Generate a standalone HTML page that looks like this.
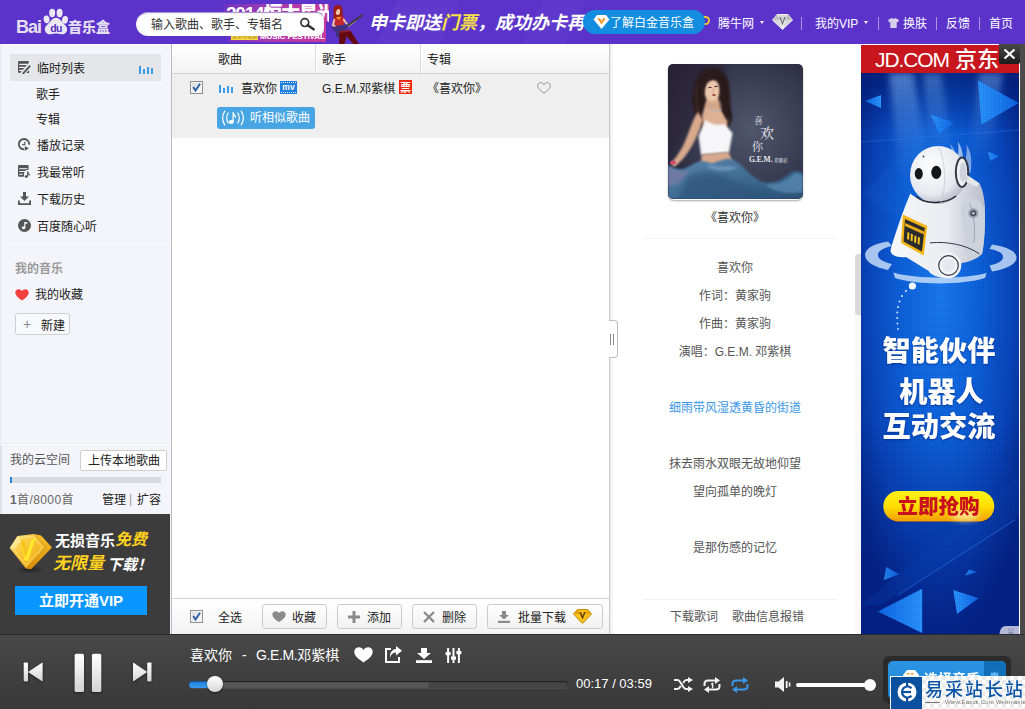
<!DOCTYPE html>
<html lang="zh-CN">
<head>
<meta charset="utf-8">
<title>百度音乐盒</title>
<style>
*{box-sizing:border-box;margin:0;padding:0}
html,body{width:1025px;height:709px;overflow:hidden;background:#fff}
body{font-family:"Liberation Sans","Noto Sans CJK SC",sans-serif;font-size:12px;color:#222;position:relative}
.abs{position:absolute}
.t{position:absolute;white-space:nowrap;line-height:16px;height:16px}
/* header */
#hd{position:absolute;left:0;top:0;width:1025px;height:44px;background:#5b33cb;overflow:hidden}
#hd .t{color:#fff}
#search{position:absolute;left:136px;top:12px;width:188px;height:24px;border-radius:12px 7px 7px 12px;background:#fff;box-shadow:inset 0 1px 1px rgba(60,30,140,.5)}
#pill{position:absolute;left:583px;top:10px;width:122px;height:24px;border-radius:12px;background:#128de0}
.sep{position:absolute;top:17px;width:1px;height:13px;background:#a997e3}
/* sidebar */
#sb{position:absolute;left:0;top:44px;width:172px;height:590px;background:#f4f5fa;border-right:1px solid #bcbcbc}
#sb .sel{position:absolute;left:10px;top:10px;width:151px;height:27px;background:#e5e6ea}
.btn{position:absolute;border:1px solid #cfcfcf;border-radius:3px;background:#fdfdfd}
#promo{position:absolute;left:0;top:470px;width:170px;height:120px;background:#3c3c3c}
/* list */
#list{position:absolute;left:172px;top:44px;width:438px;height:590px;background:#fff;border-right:1px solid #c9c9c9}
#lh{position:absolute;left:0;top:0;width:437px;height:30px;border-bottom:1px solid #d2d2d2;background:linear-gradient(#fff,#f2f2f2)}
#row{position:absolute;left:0;top:30px;width:437px;height:64px;background:#efefef}
#tb{position:absolute;left:0;top:554px;width:437px;height:36px;border-top:1px solid #d4d4d4;background:linear-gradient(#fff,#f3f3f3)}
.cb{position:absolute;width:13px;height:13px;border:1px solid #8e8f8f;background:linear-gradient(135deg,#d8d8d8,#fff);box-shadow:inset 0 0 0 1px #f4f4f4}
.btn.g{background:linear-gradient(#fff,#f1f1f1);border-color:#cbcbcb}
/* divider */
#dv{position:absolute;left:610px;top:44px;width:4px;height:590px;background:linear-gradient(90deg,#ececec,#fff)}
#hdl{position:absolute;left:609px;top:320px;width:9px;height:38px;border:1px solid #bdbdbd;border-left:none;border-radius:0 4px 4px 0;background:#fff}
#hdl i{position:absolute;top:13px;width:1px;height:11px;background:#888;left:1px}
#hdl i+i{left:4px}
/* lyric */
#ly{position:absolute;left:616px;top:44px;width:245px;height:590px}
#ly .l{position:absolute;left:0;width:238px;text-align:center;color:#555;line-height:16px;white-space:nowrap}
/* ad */
#ad{position:absolute;left:861px;top:45px;width:158px;height:589px;overflow:hidden;background:#0a3fc0}
/* player */
#pl{position:absolute;left:0;top:634px;width:1025px;height:75px;background:linear-gradient(#484848,#383838);border-top:1px solid #2b2b2b}
#pl .t{color:#fff}
#wm{position:absolute;left:890px;top:676px;width:135px;height:33px;overflow:hidden;background-color:#fff;background-image:linear-gradient(45deg,#ebebeb 25%,transparent 25%,transparent 75%,#ebebeb 75%),linear-gradient(45deg,#ebebeb 25%,transparent 25%,transparent 75%,#ebebeb 75%);background-size:8px 8px;background-position:0 0,4px 4px}
</style>
</head>
<body>

<!-- ================= HEADER ================= -->
<div id="hd">
  <div class="abs" style="left:0;top:0;width:1025px;height:44px;background:linear-gradient(115deg,rgba(255,255,255,0) 0 38%,rgba(255,255,255,.03) 38% 44%,rgba(255,255,255,0) 44% 52%,rgba(255,255,255,.025) 52% 56%,rgba(255,255,255,0) 56%)"></div>
  <!-- festival banner -->
  <div class="abs" style="left:223px;top:4px;width:106px;height:18px;background:linear-gradient(90deg,#6f35c4,#a13ab2 45%,#c83a9c)"></div>
  <div class="abs" style="left:229px;top:20px;width:97px;height:22px;background:linear-gradient(90deg,#7a36c0,#b03aac 45%,#c83a9c)"></div>
  <div class="abs" style="left:223px;top:4px;width:106px;height:38px;overflow:hidden">
    <span class="t" style="left:3px;top:-1px;font-size:19px;line-height:22px;height:22px;font-weight:900;color:#fff;letter-spacing:-1.200px">2014恒大星光</span>
    <div class="abs" style="left:8px;top:30px;width:27px;height:6px;background:#f3dc4a"></div>
    <span class="t" style="left:9px;top:29px;font-size:5px;line-height:7px;height:7px;font-weight:bold;color:#c49a22">音乐节现场</span>
    <span class="t" style="left:37px;top:28px;font-size:8px;line-height:10px;height:10px;font-weight:bold;color:#fff;letter-spacing:-.1px">MUSIC FESTIVAL</span>
  </div>
  <!-- guitar girl -->
  <svg class="abs" style="left:329px;top:3px" width="36" height="41" viewBox="0 0 36 41">
    <path d="M4.600 9 C4 4 6 2 9 2 C12.500 2 14 5 13.600 10 L13.800 15 L4.600 15.500 Z" fill="#9c1b15"/>
    <ellipse cx="8.800" cy="8.700" rx="2.300" ry="3.200" fill="#eec3a2"/>
    <path d="M5.500 7 C6 4 9 3 11.500 5 C10 5.500 8 6 7 8.500 L6 12Z" fill="#9c1b15"/>
    <path d="M4.700 15.500 L8 13.800 L13 13.500 L15.600 15 L14.800 24 L6.500 24Z" fill="#c3262c"/>
    <path d="M7 14.200 L9.800 17.200 L12.500 13.800Z" fill="#ee9620"/>
    <path d="M4.700 15.500 L2.800 22.500 L7.500 25.500 L8.500 24 L5.200 21.500 L6.300 16.500Z" fill="#eec3a2"/>
    <path d="M14.600 15 L19.500 21.500 L26.500 17 L27.300 18.300 L19.500 24 L13.800 17.500Z" fill="#eec3a2"/>
    <path d="M14 24.600 L33 11 L34.300 12.800 L15.200 26.500Z" fill="#3e3c48"/>
    <path d="M1.500 25 L9 22.500 L17.500 21.300 L19 25.500 L12.500 28.500 L10.500 33.500 L7.500 35 L6.500 28.500Z" fill="#43317e"/>
    <path d="M10.500 28 L21 27 L23 30 L11 31.500Z" fill="#8d1a22"/>
    <path d="M10.500 30 L22 28.500 L30 41 L24.500 41 L17.500 33.500 L15.500 41 L10 41Z" fill="#630a12"/>
  </svg>
  <span class="t" style="left:369px;top:10px;font-size:18px;line-height:26px;height:26px;font-weight:bold;font-style:italic;color:#fff" id="slogan">申卡即送<span style="color:#f5e04a">门票</span>，成功办卡再</span>
  <!-- logo -->
  <div id="logo">
    <span class="t" style="left:16px;top:18px;font-size:18px;line-height:18px;height:18px;font-weight:bold;color:#e6e0f3;letter-spacing:-1px">Bai</span>
    <svg class="abs" style="left:43px;top:8px" width="26" height="27" viewBox="0 0 26 27">
      <g fill="#ece8f5">
        <ellipse cx="9.2" cy="5" rx="3" ry="4.2"/>
        <ellipse cx="16.6" cy="5" rx="3" ry="4.2"/>
        <ellipse cx="3.6" cy="11.4" rx="2.9" ry="3.9" transform="rotate(-12 3.6 11.4)"/>
        <ellipse cx="22" cy="11.8" rx="2.9" ry="3.9" transform="rotate(12 22 11.8)"/>
        <path d="M13 9.800 C16.500 9.800 18 13 20.300 15.300 C22.800 17.800 24.600 19.300 24 22.400 C23.400 25.500 20.600 26.300 18.300 26.200 C16.300 26.100 14.800 25.600 13 25.600 C11.200 25.600 9.700 26.100 7.700 26.200 C5.400 26.300 2.600 25.500 2 22.400 C1.400 19.300 3.200 17.800 5.700 15.300 C8 13 9.500 9.800 13 9.800Z"/>
      </g>
      <text x="13" y="23.600" text-anchor="middle" font-family="Liberation Sans, sans-serif" font-weight="bold" font-size="10.5" fill="#5530c0" letter-spacing="-.6">du</text>
    </svg>
    <span class="t" style="left:68px;top:18px;font-size:14px;line-height:18px;height:18px;font-weight:900;color:#e4def2;letter-spacing:0">音乐盒</span>
  </div>
  <!-- search -->
  <div id="search"><span class="t" style="left:15px;top:5px;color:#333">输入歌曲、歌手、专辑名</span>
    <svg class="abs" style="left:160px;top:3px" width="22" height="18" viewBox="0 0 22 18"><circle cx="8.800" cy="7.600" r="3.900" fill="none" stroke="#333" stroke-width="1.700"/><path d="M11.800 10.200 L17.600 14.300" stroke="#333" stroke-width="2.600" stroke-linecap="round"/></svg>
  </div>
  <!-- pill -->
  <div class="abs" style="left:704px;top:16px;width:6px;height:9px;border:2px solid #e8c83a;border-left:none;border-radius:0 5px 5px 0"></div>
  <div id="pill">
    <svg class="abs" style="left:10px;top:4px" width="17" height="16" viewBox="0 0 17 16"><path d="M4 1 H13 L16.500 5.500 L8.500 15 L.5 5.500 Z" fill="#fff"/><path d="M4.500 4.200 H7 L8.500 7 L10 4.200 H12.500 L8.500 10.500 Z" fill="#f5921e"/></svg>
    <span class="t" style="left:27px;top:5px;color:#fff">了解白金音乐盒</span>
  </div>
  <span class="t" style="left:718px;top:16px">腾牛网</span>
  <div class="abs" style="left:760px;top:21px;border:2.5px solid transparent;border-top:3px solid #fff;width:0;height:0"></div>
  <!-- diamond -->
  <svg class="abs" style="left:772px;top:14px" width="21" height="16" viewBox="0 0 21 16"><path d="M5 .5 H16 L20.500 6 L10.500 15.500 L.5 6 Z" fill="#d9d9dc" stroke="#f4f4f6" stroke-width="1"/><path d="M5 .5 L7.500 6 H.5 Z M16 .5 L13.500 6 H20.500 Z" fill="#bdbdc4"/><path d="M7.500 6 H13.500 L10.500 15.500 Z" fill="#f2f2f4"/><path d="M7.200 3 H8.800 L10.500 8 L12.200 3 H13.800 L10.500 11.500 Z" fill="#77777f"/></svg>
  <span class="t" style="left:815px;top:16px">我的VIP</span>
  <div class="abs" style="left:864px;top:21px;border:2.5px solid transparent;border-top:3px solid #fff;width:0;height:0"></div>
  <svg class="abs" style="left:888px;top:18px" width="11" height="10" viewBox="0 0 11 10"><path d="M3.500 0 Q5.500 1.600 7.500 0 L11 2 L9.800 4.600 L8.700 4 V10 H2.300 V4 L1.200 4.600 L0 2 Z" fill="#d6d0e8"/></svg>
  <span class="t" style="left:903px;top:16px">换肤</span>
  <span class="t" style="left:946px;top:16px">反馈</span>
  <span class="t" style="left:989px;top:16px">首页</span>
  <div class="sep" style="left:801px"></div>
  <div class="sep" style="left:878px"></div>
  <div class="sep" style="left:936px"></div>
  <div class="sep" style="left:979px"></div>
</div>

<!-- ================= SIDEBAR ================= -->
<div id="sb">
  <div class="abs" style="left:0;top:200px;width:170px;height:1px;background:#fafbfd"></div>
  <div class="sel"></div>
  <div class="abs" style="left:0;top:0;width:171px;height:1px;background:#fbfbff"></div>
  <!-- icons -->
  <svg class="abs" style="left:18px;top:17px" width="13" height="13" viewBox="0 0 13 13"><rect x="0" y="0" width="11" height="12" rx="1.200" fill="#555"/><rect x="1.200" y="2.800" width="8" height="1.200" fill="#f1f1f4"/><rect x="1.200" y="5.800" width="5.500" height="1.200" fill="#f1f1f4"/><rect x="1.200" y="8.800" width="3.500" height="1.200" fill="#f1f1f4"/><path d="M11.500 2.500 L2.800 13" stroke="#e5e6ea" stroke-width="2.200"/><path d="M12.300 4.500 L4.600 12.800" stroke="#e5e6ea" stroke-width="4.500"/><path d="M11.600 5.300 L5.200 12.300" stroke="#555" stroke-width="1.900" stroke-linecap="round"/><path d="M11 9.700 V12 H8.800Z" fill="#555"/></svg>
  <svg class="abs" style="left:139px;top:21px" width="15" height="9" viewBox="0 0 15 9"><g fill="#3a9be6"><rect x="0" y="1" width="2" height="8"/><rect x="4" y="4" width="2" height="5"/><rect x="8" y="2" width="2" height="7"/><rect x="12" y="3" width="2" height="6"/></g></svg>
  <svg class="abs" style="left:18px;top:94px" width="13" height="13" viewBox="0 0 13 13"><path d="M6.300 11.400 A5.200 5.200 0 1 1 11.200 6.600" fill="none" stroke="#555" stroke-width="1.800"/><path d="M6.800 3.800 V6.600 H4.200" fill="none" stroke="#555" stroke-width="1.200"/><path d="M6.800 8.200 L11 10.300 L6.800 12.700Z" fill="#555"/></svg>
  <svg class="abs" style="left:18px;top:121px" width="13" height="13" viewBox="0 0 13 13"><rect x="0" y="0" width="10.600" height="11.700" rx="1" fill="#555"/><rect x="1.200" y="3.200" width="8.200" height="1" fill="#f4f5fa"/><rect x="1.200" y="6" width="5.800" height="1" fill="#f4f5fa"/><rect x="1.200" y="8.800" width="3.500" height="1" fill="#f4f5fa"/><path d="M6 13 V9.500 Q6 6 8.500 5 H12 V13Z" fill="#f4f5fa"/><ellipse cx="8.300" cy="11.500" rx="1.600" ry="1.300" fill="#555"/><path d="M9.100 11.500 V6.200 H10.200 Q10.500 8.500 12.200 10 L11.500 10.800 Q10.600 10 10.200 9.200 V11.500Z" fill="#555"/></svg>
  <svg class="abs" style="left:18px;top:148px" width="13" height="13" viewBox="0 0 13 13"><path d="M5 0 H8 V4.500 H11 L6.500 9 L2 4.500 H5Z" fill="#555"/><path d="M0 8.500 H1.800 V11.200 H11.200 V8.500 H13 V13 H0Z" fill="#555"/></svg>
  <svg class="abs" style="left:18px;top:175px" width="13" height="13" viewBox="0 0 13 13"><circle cx="6.500" cy="6.500" r="6.500" fill="#555"/><ellipse cx="5.600" cy="8.800" rx="1.800" ry="1.500" fill="#f3f4f9"/><path d="M6.200 8.800 V3 H9.300 V4.800 H7.400 V8.800Z" fill="#f3f4f9"/></svg>
  <svg class="abs" style="left:15px;top:245px" width="14" height="12" viewBox="0 0 15 13"><path d="M7.500 12.500 C3 9.500 .2 7 .2 3.800 C.2 1.600 1.900 .2 3.900 .2 C5.400 .2 6.800 1 7.500 2.300 C8.200 1 9.600 .2 11.100 .2 C13.100 .2 14.800 1.600 14.800 3.800 C14.800 7 12 9.500 7.500 12.500Z" fill="#f2403d"/></svg>

  <span class="t" style="left:37px;top:17px">临时列表</span>
  <span class="t" style="left:36px;top:43px">歌手</span>
  <span class="t" style="left:36px;top:68px">专辑</span>
  <span class="t" style="left:37px;top:94px">播放记录</span>
  <span class="t" style="left:37px;top:121px">我最常听</span>
  <span class="t" style="left:37px;top:148px">下载历史</span>
  <span class="t" style="left:37px;top:175px">百度随心听</span>
  <span class="t" style="left:15px;top:217px;font-weight:bold;color:#9a9a9a">我的音乐</span>
  <span class="t" style="left:35px;top:243px">我的收藏</span>
  <div class="btn" style="left:15px;top:269px;width:55px;height:22px;background:#f8f9fc"><span class="t" style="left:7px;top:2px;color:#888;font-size:14px">+</span><span class="t" style="left:25px;top:4px">新建</span></div>
  <div class="abs" style="left:0;top:399px;width:171px;height:1px;background:#ebecf1"></div>
  <div class="abs" style="left:0;top:400px;width:171px;height:1px;background:#fcfcfe"></div>
  <div class="abs" style="left:0;top:401px;width:3px;height:69px;background:linear-gradient(90deg,#d9dadf,#f4f5fa)"></div>
  <div class="abs" style="left:0;top:0;width:2px;height:399px;background:linear-gradient(90deg,#e6e7ec,#f4f5fa)"></div>
  <span class="t" style="left:10px;top:408px;color:#555">我的云空间</span>
  <div class="btn" style="left:80px;top:406px;width:87px;height:21px;background:#fff;border-radius:2px"><span class="t" style="left:7px;top:2px">上传本地歌曲</span></div>
  <div class="abs" style="left:10px;top:433px;width:151px;height:6px;background:#d9dadd"></div>
  <div class="abs" style="left:10px;top:433px;width:2px;height:6px;background:#2a7fe0"></div>
  <span class="t" style="left:10px;top:448px;color:#666;letter-spacing:.4px"><b>1</b>首/8000首</span>
  <span class="t" style="left:102px;top:448px;color:#222">管理</span>
  <span class="t" style="left:129px;top:447px;color:#999">|</span>
  <span class="t" style="left:137px;top:448px;color:#222">扩容</span>
  <div id="promo">
    <svg class="abs" style="left:9px;top:19px" width="46" height="40" viewBox="0 0 46 40">
      <defs>
        <linearGradient id="g1" x1="0" y1="0" x2="1" y2="1"><stop offset="0" stop-color="#ffe88a"/><stop offset=".45" stop-color="#fac432"/><stop offset="1" stop-color="#eea012"/></linearGradient>
        <linearGradient id="g2" x1="0" y1="0" x2="0" y2="1"><stop offset="0" stop-color="#f7c02a"/><stop offset="1" stop-color="#d98c08"/></linearGradient>
        <filter id="pb" x="-20%" y="-50%" width="140%" height="200%"><feGaussianBlur stdDeviation="1.200"/></filter>
      </defs>
      <ellipse cx="21" cy="36.500" rx="11" ry="1.800" fill="#1c1c1c" opacity=".7" filter="url(#pb)"/>
      <path d="M25.200 .9 L32.100 2.500 L43 14.500 L22 36.300 L17 35.500 L36.800 14.500Z" fill="url(#g2)"/>
      <path d="M.7 14.900 L8.500 2.900 L25.200 .9 L36.800 14.500 L17 35.500Z" fill="url(#g1)"/>
      <path d="M3.500 14.800 L9.800 5 L24 3.300 L33.500 14.400 L17.200 31.800Z" fill="none" stroke="#fff0a8" stroke-width=".7" opacity=".8"/>
      <path d="M.7 14.900 L8.500 2.900 L12 8 L6 15.500Z" fill="#fff2b0" opacity=".55"/>
      <path d="M12 7.800 L15.500 6.800 L17.500 22 L22.500 6.200 L26.500 5.600 L19 28 L15.500 27.500Z" fill="#ffe92a"/>
      <path d="M12 7.800 L15.500 6.800 L17.500 22 L16.500 25 Z" fill="#f5b014" opacity=".7"/>
    </svg>
    <span class="t" style="left:55px;top:17px;font-size:15px;line-height:20px;height:20px;font-weight:bold;color:#fff">无损音乐</span>
    <span class="t" style="left:115px;top:16px;font-size:16px;line-height:20px;height:20px;font-weight:bold;font-style:italic;color:#ffd21e">免费</span>
    <span class="t" style="left:53px;top:40px;font-size:17px;line-height:20px;height:20px;font-weight:bold;font-style:italic;color:#ffd21e">无限量</span>
    <span class="t" style="left:107px;top:41px;font-size:15px;line-height:20px;height:20px;font-weight:bold;font-style:italic;color:#fff">下载！</span>
    <div class="abs" style="left:15px;top:72px;width:132px;height:29px;background:#0a96ff"><span class="t" style="left:0;top:5px;width:132px;text-align:center;font-size:15px;line-height:20px;height:20px;font-weight:bold;color:#fff">立即开通VIP</span></div>
  </div>
</div>

<!-- ================= LIST ================= -->
<div id="list">
  <div id="lh">
    <span class="t" style="left:46px;top:8px">歌曲</span>
    <span class="t" style="left:150px;top:8px">歌手</span>
    <span class="t" style="left:255px;top:8px">专辑</span>
    <div class="abs" style="left:143px;top:0;width:1px;height:29px;background:#dcdcdc"></div>
    <div class="abs" style="left:144px;top:0;width:1px;height:29px;background:#fff"></div>
    <div class="abs" style="left:248px;top:0;width:1px;height:29px;background:#dcdcdc"></div>
    <div class="abs" style="left:249px;top:0;width:1px;height:29px;background:#fff"></div>
  </div>
  <div id="row">
    <div class="cb" style="left:18px;top:7px"><svg class="abs" style="left:1px;top:1px" width="9" height="9" viewBox="0 0 9 9"><path d="M1.200 4 L3.500 7.500 L8 .8" fill="none" stroke="#2c5ba8" stroke-width="1.900"/></svg></div>
    <svg class="abs" style="left:47px;top:10px" width="15" height="9" viewBox="0 0 15 9"><g fill="#3a9be6"><rect x="0" y="1" width="2" height="8"/><rect x="4" y="4" width="2" height="5"/><rect x="8" y="2" width="2" height="7"/><rect x="12" y="3" width="2" height="6"/></g></svg>
    <span class="t" style="left:69px;top:7px">喜欢你</span>
    <svg class="abs" style="left:108px;top:7px" width="17" height="13" viewBox="0 0 17 13"><rect width="17" height="13" fill="#1f80df"/><g fill="#dbeafa"><rect x="1" y="1" width="1" height="1"/><rect x="3" y="1" width="1" height="1"/><rect x="5" y="1" width="1" height="1"/><rect x="7" y="1" width="1" height="1"/><rect x="9" y="1" width="1" height="1"/><rect x="11" y="1" width="1" height="1"/><rect x="13" y="1" width="1" height="1"/><rect x="15" y="1" width="1" height="1"/><rect x="1" y="11" width="1" height="1"/><rect x="3" y="11" width="1" height="1"/><rect x="5" y="11" width="1" height="1"/><rect x="7" y="11" width="1" height="1"/><rect x="9" y="11" width="1" height="1"/><rect x="11" y="11" width="1" height="1"/><rect x="13" y="11" width="1" height="1"/><rect x="15" y="11" width="1" height="1"/></g><text x="8.500" y="9.300" text-anchor="middle" font-family="Liberation Sans, sans-serif" font-weight="bold" font-size="8.500" fill="#fff">mv</text></svg>
    <span class="t" style="left:150px;top:7px">G.E.M.邓紫棋</span>
    <div class="abs" style="left:227px;top:6px;width:13px;height:14px;background:#ee2a12"><span class="t" style="left:1px;top:1px;font-size:11px;line-height:14px;height:14px;color:#fff;font-weight:bold">票</span></div>
    <span class="t" style="left:255px;top:7px">《喜欢你》</span>
    <svg class="abs" style="left:365px;top:8px" width="14" height="12" viewBox="0 0 15 13"><path d="M7.500 12 C3 9 .7 6.800 .7 3.900 C.7 2 2.100 .7 3.900 .7 C5.400 .7 6.800 1.600 7.500 3 C8.200 1.600 9.600 .7 11.100 .7 C12.900 .7 14.300 2 14.300 3.900 C14.300 6.800 12 9 7.500 12Z" fill="none" stroke="#8a8a8a" stroke-width="1"/></svg>
    <div class="abs" style="left:45px;top:33px;width:98px;height:22px;background:#47a5e4;border-radius:3px">
      <svg class="abs" style="left:4px;top:3px" width="24" height="16" viewBox="0 0 24 16"><g fill="none" stroke="#fff" stroke-width="1.200" stroke-linecap="round"><path d="M3.800 1.200 Q-.6 8 3.800 14.800"/><path d="M7.200 3 Q4.200 8 7.200 13"/><path d="M16.800 3 Q19.800 8 16.800 13"/><path d="M20.200 1.200 Q24.600 8 20.200 14.800"/></g><ellipse cx="10.300" cy="12" rx="2.500" ry="2" fill="#fff"/><path d="M11.500 12 V2.300 H12.800 Q13.300 5 15.600 6.800 L14.800 7.800 Q13.500 6.800 12.800 5.600 V12Z" fill="#fff"/></svg>
      <span class="t" style="left:33px;top:3px;color:#fff">听相似歌曲</span></div>
  </div>
  <div id="tb">
    <div class="cb" style="left:18px;top:11px"><svg class="abs" style="left:1px;top:1px" width="9" height="9" viewBox="0 0 9 9"><path d="M1.200 4 L3.500 7.500 L8 .8" fill="none" stroke="#2c5ba8" stroke-width="1.900"/></svg></div>
    <span class="t" style="left:46px;top:11px">全选</span>
    <div class="btn g" style="left:90px;top:5px;width:65px;height:25px">
      <svg class="abs" style="left:9px;top:6px" width="14" height="11" viewBox="0 0 15 12"><path d="M7.500 12 C3 9 .2 6.800 .2 3.700 C.2 1.600 1.900 .2 3.900 .2 C5.400 .2 6.800 1 7.500 2.300 C8.200 1 9.600 .2 11.100 .2 C13.100 .2 14.800 1.600 14.800 3.700 C14.800 6.800 12 9 7.500 12Z" fill="#8b8b8b"/></svg>
      <span class="t" style="left:29px;top:5px">收藏</span></div>
    <div class="btn g" style="left:165px;top:5px;width:65px;height:25px">
      <svg class="abs" style="left:10px;top:6px" width="12" height="12" viewBox="0 0 12 12"><path d="M4.500 0 H7.500 V4.500 H12 V7.500 H7.500 V12 H4.500 V7.500 H0 V4.500 H4.500Z" fill="#8b8b8b"/></svg>
      <span class="t" style="left:29px;top:5px">添加</span></div>
    <div class="btn g" style="left:240px;top:5px;width:65px;height:25px">
      <svg class="abs" style="left:10px;top:6px" width="12" height="12" viewBox="0 0 12 12"><path d="M1 1 L11 11 M11 1 L1 11" stroke="#8b8b8b" stroke-width="2.400"/></svg>
      <span class="t" style="left:29px;top:5px">删除</span></div>
    <div class="btn g" style="left:315px;top:5px;width:116px;height:25px">
      <svg class="abs" style="left:10px;top:6px" width="12" height="12" viewBox="0 0 12 12"><path d="M4 0 H8 V4 H11 L6 8.500 L1 4 H4Z" fill="#8b8b8b"/><rect x="0" y="9.800" width="12" height="2.200" fill="#8b8b8b"/></svg>
      <span class="t" style="left:30px;top:5px">批量下载</span>
      <svg class="abs" style="left:85px;top:4px" width="19" height="15" viewBox="0 0 19 15"><path d="M4.500 .5 H14.500 L18.500 5 L9.500 14.500 L.5 5 Z" fill="#f6c21c" stroke="#c98a0a" stroke-width="1"/><path d="M4.500 .5 L6.500 5 H.5Z M14.500 .5 L12.500 5 H18.500Z" fill="#e8a010"/><path d="M6.200 3 H8 L9.500 7 L11 3 H12.800 L9.500 10.500Z" fill="#6b3a05"/></svg>
    </div>
  </div>
</div>
<div id="dv"></div>
<div id="hdl"><i></i><i></i></div>

<!-- ================= LYRICS ================= -->
<div id="ly">
  <div class="abs" style="left:52px;top:20px;width:135px;height:136px;border-radius:6px;box-shadow:0 1px 2px rgba(0,0,0,.35)"></div>
  <svg id="cover" class="abs" style="left:52px;top:20px;border-radius:5px" width="135" height="135" viewBox="0 0 135 135">
    <defs>
      <radialGradient id="cbg" cx="62%" cy="48%" r="75%"><stop offset="0" stop-color="#50566b"/><stop offset=".55" stop-color="#383c52"/><stop offset="1" stop-color="#252136"/></radialGradient>
      <linearGradient id="csk" x1="0" y1="0" x2="1" y2="1"><stop offset="0" stop-color="#5d86ad"/><stop offset=".5" stop-color="#3f6c93"/><stop offset="1" stop-color="#2b5378"/></linearGradient>
      <filter id="b1" x="-20%" y="-20%" width="140%" height="140%"><feGaussianBlur stdDeviation="0.900"/></filter>
      <filter id="b2" x="-20%" y="-20%" width="140%" height="140%"><feGaussianBlur stdDeviation="2.500"/></filter>
    </defs>
    <rect width="135" height="135" fill="url(#cbg)"/>
    <path d="M0 0 H60 L30 60 L0 90Z" fill="#2a2236" opacity=".55" filter="url(#b2)"/>
    <!-- hair back -->
    <path d="M37 5 C48 1 59 7 61 20 C63 30 61 40 64 50 C65 57 61 63 57 64 L40 67 C33 63 28 57 27 49 C23 39 24 24 29 14 C31 9 34 7 37 5Z" fill="#2a1a1e" filter="url(#b1)"/><path d="M30 20 C27 30 28 42 31 52" stroke="#5a3a34" stroke-width="1.500" fill="none" opacity=".6" filter="url(#b1)"/>
    <!-- arm -->
    <path d="M30 48 C26 52 22 66 16 80 C11 90 6 96 3 99 L6 103 C13 98 20 90 26 78 C30 70 33 62 35 56Z" fill="#d9a98c" filter="url(#b1)"/>
    <!-- neck / chest -->
    <path d="M39 34 L50 33 L52 44 L60 56 L58 66 L36 66 L34 52 Z" fill="#deb094" filter="url(#b1)"/>
    <!-- face -->
    <ellipse cx="44" cy="26.500" rx="8.200" ry="11" fill="#ecc6ab" filter="url(#b1)"/>
    <path d="M34 20 C35 10 46 7 54 13 C50 14.500 43 15 39 19 C36.500 23 36 30 35.500 38 C32 32 32 25 34 20Z" fill="#2b1b1f" filter="url(#b1)"/>
    <path d="M52 14 C57 20 56 30 58 38 C60 46 62 52 60 58 C56 52 53 44 52 36Z" fill="#2b1b1f" filter="url(#b1)"/>
    <ellipse cx="46" cy="31" rx="1.900" ry=".9" fill="#a04848"/><path d="M40.500 23.800 Q42 22.800 43.500 23.600 M46.500 22.800 Q48 21.800 49.600 22.600" stroke="#2b1b1f" stroke-width="1" fill="none"/><path d="M45 24.500 L45.800 28.500 L44.500 28.800" stroke="#c9997e" stroke-width=".6" fill="none"/><path d="M40 36 Q46 40 52 36 L54 44 Q46 47 38 44Z" fill="#cfa084" opacity=".6" filter="url(#b1)"/><path d="M42 44 Q48 50 54 45" stroke="#9fb8c8" stroke-width=".7" fill="none"/>
    <!-- top -->
    <path d="M30.500 72 L37.500 56 C42 60 50 62 56.500 60 L64.500 69 L61 88.500 L33 91Z" fill="#f6f6f8" filter="url(#b1)"/>
    <!-- midriff -->
    <path d="M33.700 90.500 L60.500 88 L67 104 L32.600 104Z" fill="#d8a98e" filter="url(#b1)"/>
    <!-- skirt -->
    <path d="M0 101 C6 104 10 106 15 105 C22 103 27 98 32.600 97 C38 97 42 100 45.500 99 C52 97 57 94 62.600 95 C69 97 73 101 77.600 105.500 C83 111 89 116 94.800 118 C101 119 107 118 112 116 C117 114 121 110 124.800 107.600 C128 106 132 108 135 108.700 V135 H0Z" fill="url(#csk)" filter="url(#b1)"/>
    <path d="M20 112 C34 106 50 108 64 116 C76 122 90 128 104 127 L100 135 H10Z" fill="#2d5479" opacity=".7" filter="url(#b2)"/>
    <path d="M40 100 C50 104 62 100 70 104 C62 108 50 108 40 104Z" fill="#7aa3c6" opacity=".6" filter="url(#b1)"/>
    <path d="M96 120 C106 122 118 118 126 110 C130 108 133 110 135 112 V128 C124 130 108 130 96 120Z" fill="#5b8cb4" opacity=".7" filter="url(#b1)"/>
    <path d="M0 104 C8 108 14 108 22 106 L10 120 L0 122Z" fill="#8a7aa6" opacity=".55" filter="url(#b1)"/>
    <ellipse cx="5" cy="98.500" rx="3" ry="1.800" fill="#d64a6a"/>
    <!-- cover text -->
    <g font-family="'Liberation Serif','Noto Serif CJK SC',serif" fill="#e9e9ee">
      <text x="86" y="60" font-size="9">喜</text>
      <text x="92" y="74" font-size="14">欢</text>
      <text x="84" y="87" font-size="11">你</text>
      <text x="81" y="98" font-size="7.500" font-weight="bold">G.E.M.</text>
      <text x="106" y="97.500" font-size="4.500">邓紫棋</text>
    </g>
  </svg>
  <div class="l" style="top:166px;color:#333">《喜欢你》</div>
  <div class="abs" style="left:28px;top:194px;width:192px;height:1px;background:#f4f4f4"></div>
  <div class="l" style="top:216px">喜欢你</div>
  <div class="l" style="top:244px">作词：黄家驹</div>
  <div class="l" style="top:272px">作曲：黄家驹</div>
  <div class="l" style="top:300px">演唱：G.E.M. 邓紫棋</div>
  <div class="l" style="top:356px;color:#3a97e6">细雨带风湿透黄昏的街道</div>
  <div class="l" style="top:412px">抹去雨水双眼无故地仰望</div>
  <div class="l" style="top:440px">望向孤单的晚灯</div>
  <div class="l" style="top:496px">是那伤感的记忆</div>
  <div class="abs" style="left:28px;top:555px;width:192px;height:1px;background:#f2f2f2"></div>
  <span class="t" style="left:54px;top:565px;color:#555">下载歌词</span>
  <span class="t" style="left:116px;top:565px;color:#555">歌曲信息报错</span>
  <div class="abs" style="left:239px;top:210px;width:6px;height:61px;background:#d9d9d9;border-radius:3px 0 0 3px"></div>
  <div class="abs" style="left:239px;top:271px;width:6px;height:319px;background:#f9f9f9"></div>
</div>

<!-- ================= AD ================= -->
<div id="ad">
<svg class="abs" style="left:0;top:0" width="158" height="589" viewBox="0 0 158 589">
  <defs>
    <radialGradient id="abg" cx="50%" cy="42%" r="62%" gradientTransform="translate(0 0) scale(1 1)"><stop offset="0" stop-color="#1a7af0"/><stop offset=".4" stop-color="#0d62dc"/><stop offset=".75" stop-color="#0945ba"/><stop offset="1" stop-color="#05278a"/></radialGradient>
    <linearGradient id="abot" x1="0" y1="0" x2="0" y2="1"><stop offset="0" stop-color="#031c80" stop-opacity="0"/><stop offset="1" stop-color="#031c80" stop-opacity=".6"/></linearGradient>
    <linearGradient id="atop" x1="0" y1="0" x2="0" y2="1"><stop offset="0" stop-color="#021a70" stop-opacity=".7"/><stop offset="1" stop-color="#021a70" stop-opacity="0"/></linearGradient>
    <linearGradient id="beam" x1="0" y1="0" x2="0" y2="1"><stop offset="0" stop-color="#8fc4ff" stop-opacity=".55"/><stop offset="1" stop-color="#3a8cf0" stop-opacity="0"/></linearGradient>
    <linearGradient id="tri" x1="0" y1="0" x2="1" y2="0"><stop offset="0" stop-color="#2b95ff"/><stop offset="1" stop-color="#0d66e4"/></linearGradient>
    <linearGradient id="tri2" x1="0" y1="0" x2="1" y2="0"><stop offset="0" stop-color="#0d66e4"/><stop offset="1" stop-color="#2b95ff"/></linearGradient>
    <linearGradient id="ybtn" x1="0" y1="0" x2="0" y2="1"><stop offset="0" stop-color="#fff21a"/><stop offset=".5" stop-color="#ffdf00"/><stop offset="1" stop-color="#f29c00"/></linearGradient>
    <radialGradient id="rhead" cx="38%" cy="35%" r="70%"><stop offset="0" stop-color="#ffffff"/><stop offset=".7" stop-color="#e6e8ee"/><stop offset="1" stop-color="#b4b8c6"/></radialGradient>
    <linearGradient id="rbody" x1="0" y1="0" x2="1" y2="0"><stop offset="0" stop-color="#f7f8fa"/><stop offset=".6" stop-color="#e9ebf0"/><stop offset="1" stop-color="#b9bdca"/></linearGradient>
    <pattern id="dots" width="2" height="2" patternUnits="userSpaceOnUse"><rect x="0" y="0" width="1" height="1" fill="#00104a" opacity=".16"/></pattern>
    <filter id="ab1" x="-20%" y="-20%" width="140%" height="140%"><feGaussianBlur stdDeviation="0.700"/></filter>
    <filter id="ab3" x="-30%" y="-30%" width="160%" height="160%"><feGaussianBlur stdDeviation="3"/></filter>
  </defs>
  <rect width="158" height="589" fill="url(#abg)"/>
  <rect y="380" width="158" height="209" fill="url(#abot)"/>
  <rect y="28" width="158" height="60" fill="url(#atop)"/>
  <!-- light beams -->
  <g filter="url(#ab3)">
    <path d="M28 28 L52 28 L74 150 L40 150Z" fill="url(#beam)"/>
    <path d="M62 28 L80 28 L96 140 L70 140Z" fill="url(#beam)" opacity=".7"/>
    <path d="M118 28 L142 28 L128 120 L108 120Z" fill="url(#beam)" opacity=".8"/>
  </g>
  <!-- faint geometry -->
  <path d="M0 96 L158 84 L158 86 L0 98Z" fill="#3b8bf2" opacity=".18"/>
  <path d="M0 150 L60 90 L80 200Z" fill="#2a7cf0" opacity=".10"/>
  <path d="M153.500 474 L154.500 475.300 L36.800 550.800 L36 549.700Z" fill="#2f80f0" opacity=".4"/>
  <path d="M158 430 L158 470 L20 560 L0 560Z" fill="#0b46b8" opacity=".25"/>
  <!-- triangles top -->
  <g filter="url(#ab1)">
    <path d="M4 56 L20 50 L20 63Z" fill="url(#tri2)"/>
    <path d="M117 35.600 L157.700 58 L120.400 79.600Z" fill="url(#tri)"/>
    <path d="M69.600 69.500 L93.300 77.400 L78.600 88.700Z" fill="url(#tri)"/>
    <path d="M127 106.700 L138.500 111 L129.400 115.800Z" fill="url(#tri)"/>
    <!-- triangles bottom -->
    <path d="M22.800 535.300 L38.400 529.300 L25.200 522.100Z" fill="url(#tri)" opacity=".85"/>
    <path d="M104.300 530.500 L116.300 527 L108 524.500Z" fill="url(#tri)" opacity=".85"/>
    <path d="M16.800 566.500 L61.200 543.700 L61.200 588Z" fill="url(#tri2)"/>
    <path d="M92.300 545 L117.500 553.300 L96 569Z" fill="url(#tri)"/>
  </g>
  <rect y="28" width="158" height="561" fill="url(#dots)"/>
  <!-- base ring -->
  <g fill="#cfe4fc" opacity=".8" filter="url(#ab1)">
    <path d="M27 196.500 C12 199 3 204 4.200 211 C5 217 13 222 27 225 L31 219 C22 217 17 214 17 210 C17 206 22 203 31 201Z"/>
    <path d="M131 199.500 C147 202 156.500 207 155.500 213.500 C154.500 219.500 146 224 131 226.500 L128.500 220.500 C137 218.500 142 216 142 212 C142 208 137 205.500 128.500 204Z"/>
    <path d="M32.400 227.500 C52 234 104 234.500 125.600 228 L124 233 C100 240.500 54 240 34 233Z"/>
  </g>
  <!-- robot -->
  <g>
    <path d="M95 126 C97 112 98.500 101 96.500 96.500 C101 101 103 112 103 126Z" fill="#d5e4f8" opacity=".7"/>
    <path d="M101.500 127 C105 114 107 104 105 99.500 C110 105 111.500 116 109.500 128Z" fill="#d5e4f8" opacity=".55"/>
    <path d="M89.500 121 C91 110 91 103 89 99 C94 103 96 112 96.500 123Z" fill="#d5e4f8" opacity=".5"/>
    <!-- body -->
    <path d="M49.400 148.500 C60 160 96 158 108.600 131.500 L118.500 138.600 C122.500 146 124.500 158 124 169.600 C124 186 123 200 121 209 C116 214 108 217 100.500 218 C99 228 92 234 84 233 C76 232.500 70 230 67.700 226 L45 212 C36 213 29 210 29.600 205 C31 200 40 170 49.400 148.500Z" fill="url(#rbody)"/>
    <path d="M100 158 C110 150 122 152 124 169.600 C124 186 123 200 121 209 C117 212 113 213 110 214 C104 198 100 178 100 158Z" fill="#cdd1dc"/>
    <path d="M108.600 158.400 C114 170 114 186 112.900 198" fill="none" stroke="#8d92a0" stroke-width=".7"/>
    <path d="M69 197.900 C86 196 106 200 118.500 209" fill="none" stroke="#343845" stroke-width="1"/>
    <circle cx="112.300" cy="168.200" r="5" fill="#9a9fac"/><circle cx="112.300" cy="168.200" r="3" fill="#4a4e59"/><circle cx="112.300" cy="168.200" r="1.300" fill="#c8ccd4"/>
    <!-- wheel -->
    <circle cx="87.500" cy="220.500" r="12.700" fill="#f3f4f7"/><circle cx="87.500" cy="220.500" r="9.800" fill="none" stroke="#343845" stroke-width="1.200"/><circle cx="87.500" cy="220.500" r="6.500" fill="#e6e8ee"/>
    <!-- screen -->
    <path d="M41.800 169.600 L66.300 181 L62.600 210.500 L40 198Z" fill="#f2b416"/>
    <path d="M44 174 L63.800 183 L60.800 206.500 L42.500 196.500Z" fill="#2b2a2c"/>
    <path d="M44.300 178 L63.200 186.500 L62.800 189.500 L44 181Z" fill="#e8a91a"/>
    <g fill="#f4c21e"><path d="M46.500 187 L48.500 188 L48 195 L46 194Z"/><path d="M50 188.600 L52 189.600 L51.500 196.600 L49.500 195.600Z"/><path d="M53.500 190.200 L55.500 191.200 L55 198.200 L53 197.200Z"/><path d="M57 191.800 L59 192.800 L58.500 199.800 L56.500 198.800Z"/></g>
    <!-- head -->
    <ellipse cx="77" cy="130" rx="28" ry="29" fill="url(#rhead)"/>
    <path d="M55 151.300 C62 159 84 160 95 151" fill="none" stroke="#262a35" stroke-width="1.500"/>
    <path d="M77 101 C84 112 86 140 80 158" fill="none" stroke="#c2c6d2" stroke-width=".7"/>
    <ellipse cx="57.800" cy="128.700" rx="4" ry="5.700" fill="#15161a"/>
    <ellipse cx="75.300" cy="127.300" rx="5" ry="6.600" fill="#15161a"/>
    <circle cx="62.500" cy="111.500" r=".9" fill="#3a3d46"/>
    <ellipse cx="101" cy="127.300" rx="6.200" ry="14.700" fill="#eef0f4" stroke="#353945" stroke-width="2"/>
    <ellipse cx="102" cy="127.300" rx="3.400" ry="10" fill="#d0d3dc"/>
    <path d="M106 130 L118.500 138.600 L116 142 L105 137Z" fill="#e4e6ec"/>
  </g>
  <!-- dot trail -->
  <circle cx="51.400" cy="241" r="3.600" fill="#f4f8ff"/>
  <g fill="#cfe2fb"><circle cx="45" cy="246" r="1.100"/><circle cx="41" cy="251" r="1.100"/><circle cx="38.500" cy="256.500" r="1.100"/><circle cx="37" cy="262" r="1.100"/><circle cx="36.300" cy="267.500" r="1"/><circle cx="36.200" cy="273" r="1"/><circle cx="36.500" cy="278.500" r=".9"/><circle cx="37" cy="284" r=".9"/></g>
  <!-- header -->
  <rect width="158" height="28" fill="#c8161e"/>
  <text x="14" y="22" font-family="'Liberation Sans','Noto Sans CJK SC',sans-serif" font-size="21" fill="#fff" letter-spacing="-1.100">JD.COM</text>
  <text x="94" y="22" font-family="'Liberation Sans','Noto Sans CJK SC',sans-serif" font-size="22" font-weight="500" fill="#fff">京东</text>
  <!-- text -->
  <g font-family="'Liberation Sans','Noto Sans CJK SC',sans-serif" font-weight="900" font-size="28.200" fill="#fff" text-anchor="middle" style="filter:drop-shadow(0 1px 1px rgba(0,20,90,.5))">
    <text x="78" y="316">智能伙伴</text>
    <text x="80.500" y="356.500">机器人</text>
    <text x="78" y="391.500">互动交流</text>
  </g>
  <!-- button -->
  <rect x="23" y="447.500" width="111" height="30.500" rx="15.200" fill="#072a86" opacity=".5" filter="url(#ab1)"/>
  <rect x="22.300" y="446" width="111" height="30.500" rx="15.200" fill="url(#ybtn)"/>
  <ellipse cx="104" cy="470" rx="14" ry="6" fill="#fff8c0" opacity=".7" filter="url(#ab3)"/>
  <text x="77.500" y="468.500" text-anchor="middle" font-family="'Liberation Sans','Noto Sans CJK SC',sans-serif" font-weight="900" font-size="20.600" fill="#c9101c">立即抢购</text>
  <!-- info tab -->
  <path d="M138.500 589 C139 584 141 581 145 581 H158 V589Z" fill="#b4b8d6"/>
  <g fill="#8b8fb0"><circle cx="148" cy="584.500" r="1"/><circle cx="151.500" cy="584.500" r="1"/><ellipse cx="149.800" cy="587.800" rx="2.600" ry="1.400"/></g>
</svg>
</div>
<div class="abs" style="left:1019px;top:44px;width:1px;height:590px;background:#fff"></div>
<div class="abs" style="left:1020px;top:44px;width:5px;height:590px;background:#4b4b4b"></div>
<div class="abs" style="left:999px;top:44px;width:21px;height:20px;background:linear-gradient(#484848,#1c1c1c);border-radius:0 0 2px 2px">
  <svg class="abs" style="left:4px;top:4px" width="13" height="12" viewBox="0 0 13 12"><path d="M1.500 1.500 L11.500 10.500 M11.500 1.500 L1.500 10.500" stroke="#fff" stroke-width="2.200"/></svg>
</div>

<!-- ================= PLAYER ================= -->
<div id="pl">
  <!-- prev / pause / next -->
  <svg class="abs" style="left:20px;top:16px" width="140" height="44" viewBox="0 0 140 44" style="overflow:visible">
    <defs><linearGradient id="wg" x1="0" y1="0" x2="0" y2="1"><stop offset="0" stop-color="#ffffff"/><stop offset="1" stop-color="#d4d4d4"/></linearGradient></defs>
    <g fill="url(#wg)" style="filter:drop-shadow(0 1px 1px rgba(0,0,0,.5))">
      <rect x="3.700" y="11.500" width="4.300" height="19" rx=".8"/>
      <path d="M8 21 L22 11.800 Q22.600 11.500 22.600 12.300 V29.700 Q22.600 30.500 22 30.200Z"/>
      <rect x="54.600" y="2.700" width="9.400" height="38.300" rx="1.600"/>
      <rect x="71.900" y="2.700" width="9.400" height="38.300" rx="1.600"/>
      <rect x="127.200" y="11.500" width="4.300" height="19" rx=".8"/>
      <path d="M127.200 21 L113.600 11.800 Q113 11.500 113 12.300 V29.700 Q113 30.500 113.600 30.200Z"/>
    </g>
  </svg>
  <span class="t" style="left:190px;top:11px;font-size:14px;line-height:18px;height:18px">喜欢你</span>
  <span class="t" style="left:242px;top:11px;font-size:14px;line-height:18px;height:18px">-</span>
  <span class="t" style="left:256px;top:11px;font-size:14px;line-height:18px;height:18px"><span style="letter-spacing:-.4px">G.E.M.</span>邓紫棋</span>
  <!-- icons -->
  <svg class="abs" style="left:354px;top:12px" width="19" height="16" viewBox="0 0 19 16"><path d="M9.500 15.500 C4 11.800 .3 8.800 .3 4.800 C.3 2 2.400 .3 4.900 .3 C6.800 .3 8.600 1.400 9.500 3 C10.400 1.400 12.200 .3 14.100 .3 C16.600 .3 18.700 2 18.700 4.800 C18.700 8.800 15 11.800 9.500 15.500Z" fill="#fff"/></svg>
  <svg class="abs" style="left:385px;top:11px" width="17" height="17" viewBox="0 0 17 17"><path d="M6 3 H1 V16 H14 V11" fill="none" stroke="#fff" stroke-width="2"/><path d="M11 0 L17 4.800 L11 9.600 V6.500 C8 6.500 6.300 8 5 11.500 C5 6.500 7.200 3.300 11 3.100Z" fill="#fff"/></svg>
  <svg class="abs" style="left:416px;top:13px" width="16" height="15" viewBox="0 0 16 15"><path d="M5 0 H11 V5 H15 L8 11 L1 5 H5Z" fill="#fff"/><rect x="0" y="12.200" width="16" height="2.800" fill="#fff"/></svg>
  <svg class="abs" style="left:445px;top:13px" width="17" height="15" viewBox="0 0 17 15"><g fill="#fff"><rect x="2.100" y="0" width="2" height="15"/><rect x="7.500" y="0" width="2" height="15"/><rect x="12.900" y="0" width="2" height="15"/><rect x=".6" y="4" width="5" height="3.200"/><rect x="6" y="8.500" width="5" height="3.200"/><rect x="11.400" y="3" width="5" height="3.200"/></g></svg>
  <!-- progress -->
  <div class="abs" style="left:189px;top:46px;width:379px;height:7px;border-radius:3.500px;background:#454545;box-shadow:inset 0 1px 1px #1d1d1d,0 1px 0 rgba(255,255,255,.08)"></div>
  <div class="abs" style="left:189px;top:46px;width:240px;height:7px;border-radius:3.500px 0 0 3.500px;background:#565656;box-shadow:inset 0 1px 1px #1d1d1d"></div>
  <div class="abs" style="left:189px;top:46px;width:26px;height:7px;border-radius:3.500px 0 0 3.500px;background:linear-gradient(#1f7fd8,#3a9bf0);box-shadow:inset 0 1px 1px #0f4f98"></div>
  <div class="abs" style="left:207px;top:41px;width:16px;height:16px;border-radius:8px;background:linear-gradient(#ffffff,#d6d6d6);box-shadow:0 1px 2px rgba(0,0,0,.6)"></div>
  <span class="t" style="left:576px;top:41px;font-size:13px">00:17 / 03:59</span>
  <!-- mode icons -->
  <svg class="abs" style="left:674px;top:42px" width="19" height="15" viewBox="0 0 19 15"><g fill="none" stroke="#f2f2f2" stroke-width="2"><path d="M0 3 H3.500 C7 3 8.500 12 12 12 H15"/><path d="M0 12 H3.500 C5 12 6 10.500 6.800 9 M9.200 6 C10 4.500 10.800 3 12 3 H15"/></g><path d="M14 0 L19 3 L14 6Z M14 9 L19 12 L14 15Z" fill="#f2f2f2"/></svg>
  <svg class="abs" style="left:703px;top:42px" width="18" height="16" viewBox="0 0 18 16"><g fill="none" stroke="#f2f2f2" stroke-width="2"><path d="M1.500 9 V7 Q1.500 3.500 5 3.500 H13"/><path d="M16.500 7 V9 Q16.500 12.500 13 12.500 H5"/></g><path d="M12 0 L17 3.500 L12 7Z M6 9 L1 12.500 L6 16Z" fill="#f2f2f2"/><path d="M8 6.800 L9.300 5.800 H10.300 V11 H8.900 V7.600 L8 8.100Z" fill="#f2f2f2"/></svg>
  <svg class="abs" style="left:731px;top:42px" width="18" height="16" viewBox="0 0 18 16"><g fill="none" stroke="#3a96e6" stroke-width="2"><path d="M1.500 9 V7 Q1.500 3.500 5 3.500 H13"/><path d="M16.500 7 V9 Q16.500 12.500 13 12.500 H5"/></g><path d="M12 0 L17 3.500 L12 7Z M6 9 L1 12.500 L6 16Z" fill="#3a96e6"/></svg>
  <!-- volume -->
  <svg class="abs" style="left:775px;top:42px" width="16" height="15" viewBox="0 0 16 15"><path d="M0 4.500 H3.500 L9 0 V15 L3.500 10.500 H0Z" fill="#f2f2f2"/><rect x="10.800" y="4" width="1.800" height="7" fill="#f2f2f2"/><rect x="13.800" y="5.500" width="1.600" height="4" fill="#f2f2f2"/></svg>
  <div class="abs" style="left:796px;top:48px;width:74px;height:4px;border-radius:2px;background:#fff"></div>
  <div class="abs" style="left:864px;top:44px;width:12px;height:12px;border-radius:6px;background:#fff"></div>
  <!-- quality button -->
  <div class="abs" style="left:883px;top:21px;width:128px;height:48px;border-radius:6px;background:#2b2b2b;box-shadow:0 1px 0 rgba(255,255,255,.06)"></div>
  <div class="abs" style="left:888px;top:26px;width:118px;height:38px;border-radius:5px;background:linear-gradient(#2b95e4,#1f84d6);overflow:hidden">
    <div class="abs" style="left:96px;top:0;width:22px;height:38px;background:#116fb8"></div>
    <svg class="abs" style="left:15px;top:9px" width="16" height="16" viewBox="0 0 16 16"><path d="M4 0 H12 L16 5 V16 H0 V5Z" fill="#fff"/><rect x="4" y="3" width="2.500" height="1.500" fill="#f59a1e"/><rect x="8" y="3" width="2.500" height="1.500" fill="#f59a1e"/></svg>
    <span class="t" style="left:36px;top:9px;font-size:14px;line-height:18px;height:18px;font-weight:bold;color:#fff">选择音质</span>
    <svg class="abs" style="left:101px;top:10px" width="11" height="11" viewBox="0 0 11 11"><path d="M5.500 0 L6.800 2 L9.400 1.600 L9 4.200 L11 5.500 L9 6.800 L9.400 9.400 L6.800 9 L5.500 11 L4.200 9 L1.600 9.400 L2 6.800 L0 5.500 L2 4.200 L1.600 1.600 L4.200 2Z" fill="#5fb0ee"/></svg>
  </div>
</div>
<!-- watermark -->
<div id="wm">
  <div class="abs" style="left:1px;top:1px;width:31px;height:32px;background:#0b4f9f"></div>
  <svg class="abs" style="left:7px;top:6px" width="20" height="20" viewBox="0 0 20 20"><circle cx="10" cy="10" r="9.500" fill="#fff"/><path d="M14.500 6.200 A5.500 5.500 0 1 0 14.500 13.800" fill="none" stroke="#0b4f9f" stroke-width="2.200"/><rect x="6" y="8.900" width="8" height="2.200" fill="#0b4f9f"/><rect x="9" y="0" width="2.200" height="4" fill="#0b4f9f"/><rect x="9" y="16" width="2.200" height="4" fill="#0b4f9f"/></svg>
  <span class="t" style="left:35px;top:3px;font-size:18px;line-height:22px;height:22px;font-weight:500;color:#0b55a8;letter-spacing:2px">易采站长站</span>
  <div class="abs" style="left:35px;top:26px;width:15px;height:1px;background:#777"></div>
  <span class="t" style="left:55px;top:22px;font-size:6px;line-height:8px;height:8px;color:#777;letter-spacing:.2px">Www.Easck.Com Webmaster</span>
</div>

</body>
</html>
